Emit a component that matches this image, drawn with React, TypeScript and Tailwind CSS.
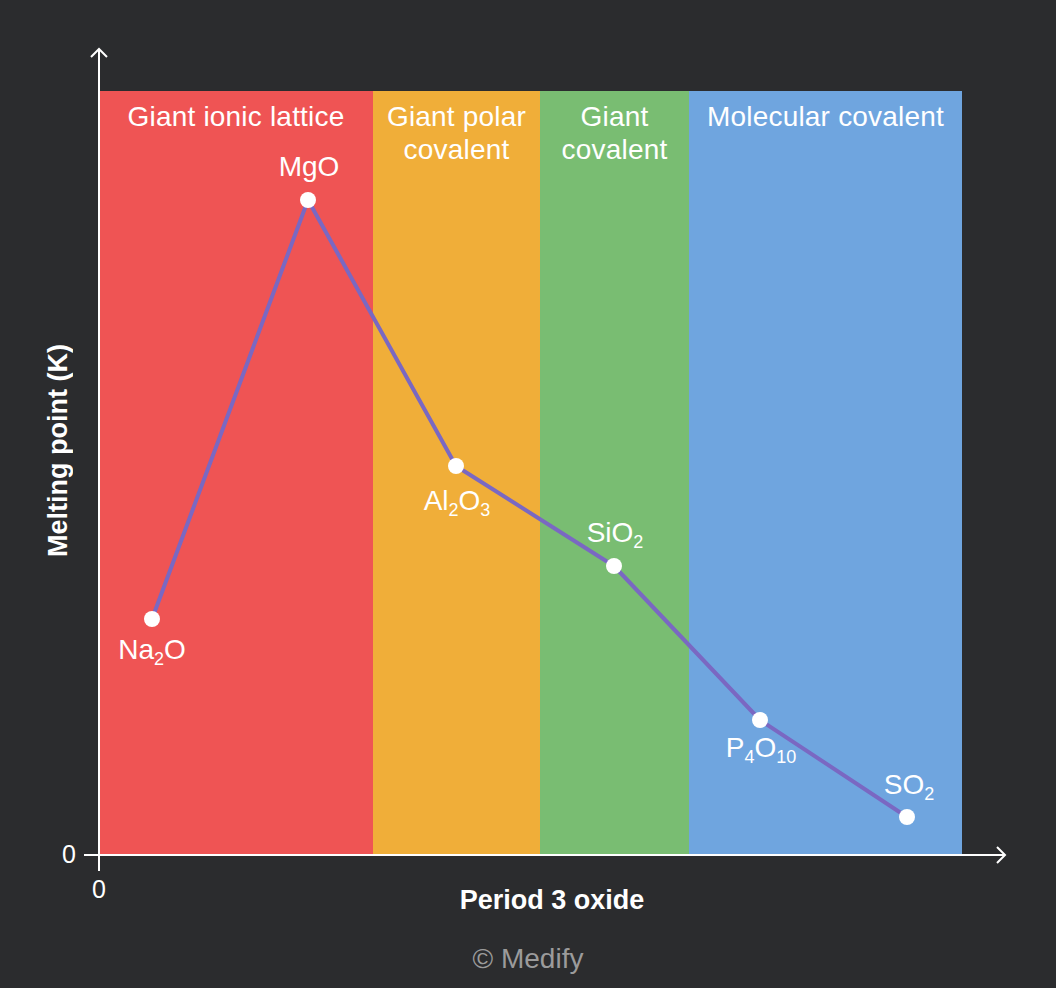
import React from "react";

const Sub = ({ children }: { children: React.ReactNode }) => (
  <span className="relative top-[6px] text-[18px] leading-none">{children}</span>
);

const points: [number, number][] = [
  [152, 619],
  [308, 200],
  [456, 466],
  [614, 566],
  [760, 720],
  [907, 817],
];

const labels: { cls: string; content: React.ReactNode }[] = [
  { cls: "left-[53px] top-[543px]", content: <>Na<Sub>2</Sub>O</> },
  { cls: "left-[210px] top-[60px]", content: <>MgO</> },
  { cls: "left-[358px] top-[394px]", content: <>Al<Sub>2</Sub>O<Sub>3</Sub></> },
  { cls: "left-[516px] top-[426px]", content: <>SiO<Sub>2</Sub></> },
  { cls: "left-[662px] top-[641px]", content: <>P<Sub>4</Sub>O<Sub>10</Sub></> },
  { cls: "left-[810px] top-[678px]", content: <>SO<Sub>2</Sub></> },
];

const bands = [
  { cls: "w-[274px] bg-[#ef5454]", lines: ["Giant ionic lattice"] },
  { cls: "w-[167px] bg-[#f0ae39]", lines: ["Giant polar", "covalent"] },
  { cls: "w-[149px] bg-[#79bd72]", lines: ["Giant", "covalent"] },
  { cls: "w-[273px] bg-[#6fa5df]", lines: ["Molecular covalent"] },
];

export default function App() {
  return (
    <div className="relative w-[1056px] h-[988px] overflow-hidden bg-[#2b2c2e] text-white font-['Liberation_Sans',Arial,sans-serif]">
      <div className="flex pt-[91px]">
        <div className="flex w-[99px] shrink-0 items-center justify-center pl-[18px] pb-[45px]">
          <span className="rotate-180 whitespace-nowrap text-[27px] font-bold leading-none [writing-mode:vertical-rl]">
            Melting point (K)
          </span>
        </div>
        <div className="relative flex h-[763px] w-[863px]">
          {bands.map((b, i) => (
            <div key={i} className={`${b.cls} shrink-0 pt-[9px] text-center text-[28px] leading-[33px] tracking-[0.2px]`}>
              {b.lines.map((l, j) => (
                <div key={j} className="whitespace-nowrap">{l}</div>
              ))}
            </div>
          ))}
          {labels.map((l, i) => (
            <div
              key={i}
              className={`absolute ${l.cls} -translate-x-1/2 whitespace-nowrap text-[28px] leading-[32px]`}
            >
              {l.content}
            </div>
          ))}
        </div>
      </div>
      <div className="pt-[30px] pl-[48px] text-center text-[27px] font-bold leading-[32px]">Period 3 oxide</div>
      <div className="pt-[27px] text-center text-[28px] leading-[32px] text-[#9b9b9b]">© Medify</div>

      <svg className="pointer-events-none absolute left-0 top-0" width="1056" height="988">
        <line x1="99" y1="49" x2="99" y2="871" stroke="#ffffff" strokeWidth="2" />
        <polyline points="91,57 99,49 107,57" fill="none" stroke="#ffffff" strokeWidth="2" />
        <line x1="84" y1="855" x2="1005" y2="855" stroke="#ffffff" strokeWidth="2" />
        <polyline points="997,847 1005,855 997,863" fill="none" stroke="#ffffff" strokeWidth="2" />
        <polyline
          points={points.map((p) => p.join(",")).join(" ")}
          fill="none"
          stroke="#7a68c2"
          strokeWidth="4"
          strokeLinejoin="round"
        />
        {points.map(([x, y], i) => (
          <circle key={i} cx={x} cy={y} r="8" fill="#ffffff" />
        ))}
        <text x="69" y="863" textAnchor="middle" fill="#ffffff" fontSize="25" fontFamily="Liberation Sans, Arial, sans-serif">
          0
        </text>
        <text x="99" y="898" textAnchor="middle" fill="#ffffff" fontSize="25" fontFamily="Liberation Sans, Arial, sans-serif">
          0
        </text>
      </svg>
    </div>
  );
}
